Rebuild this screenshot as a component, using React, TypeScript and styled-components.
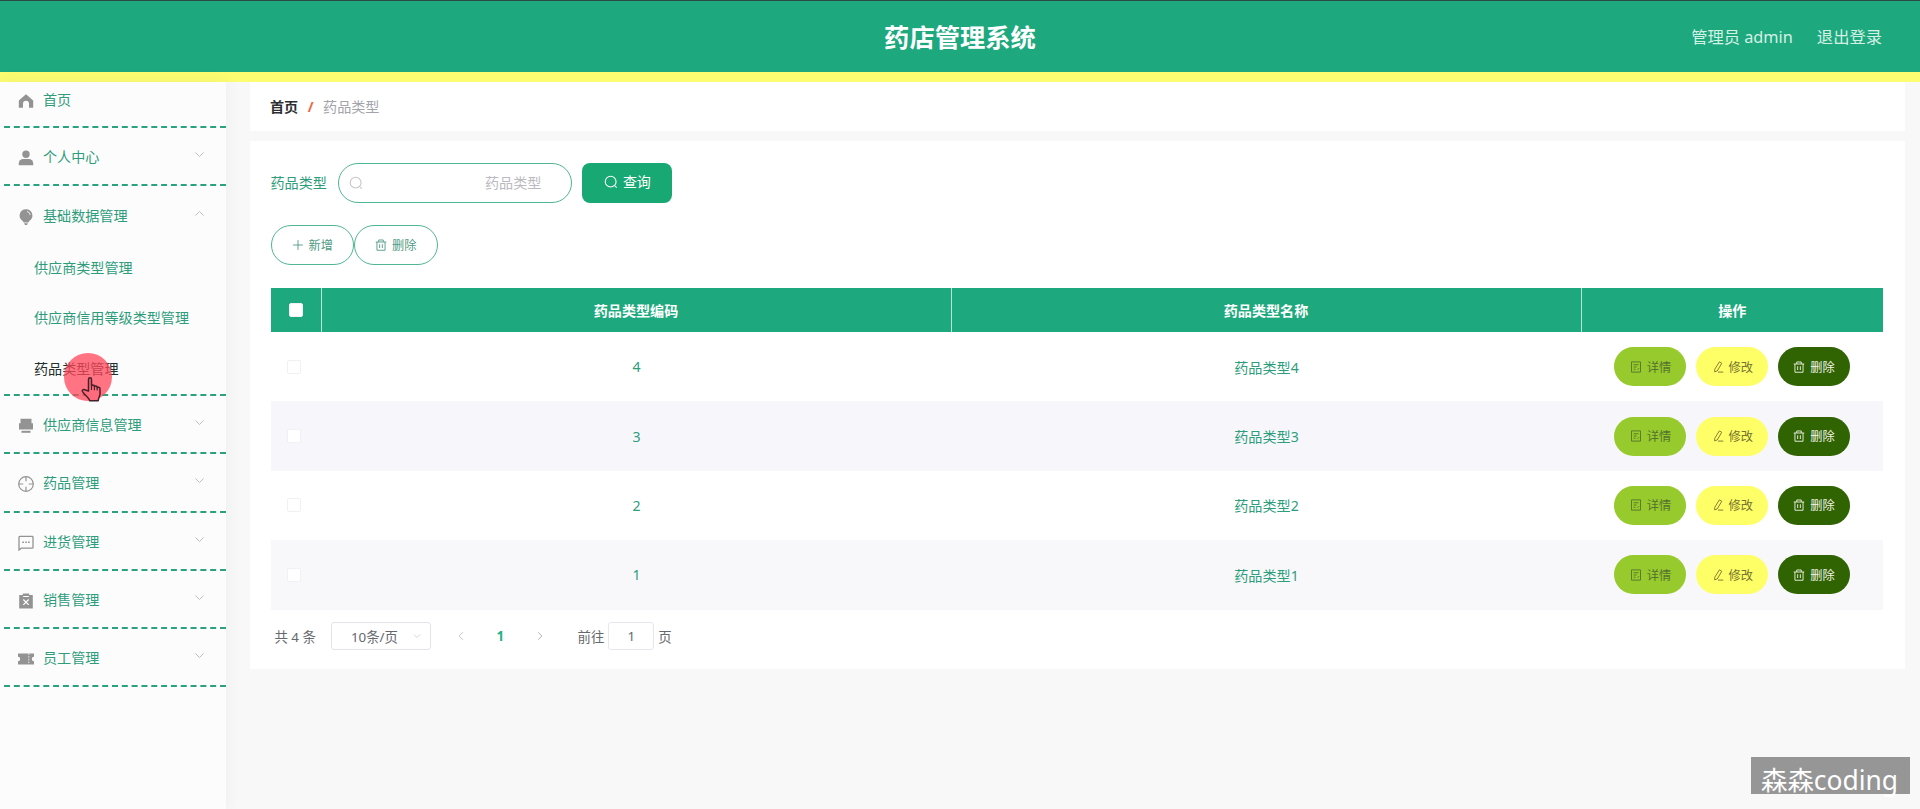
import React from "react";
import styled, { createGlobalStyle, css } from "styled-components";

const GREEN = "#1ea87e";

const GlobalStyle = createGlobalStyle`
  *, *::before, *::after { box-sizing: border-box; }
  html, body { margin: 0; height: 100%; }
  body {
    background: #f8f8f9;
    font-family: "Noto Sans", "Noto Sans CJK SC", sans-serif;
    font-size: 14.1px;
    color: #2e9d7b;
    overflow: hidden;
  }
  button, input { font-family: inherit; }
`;

const Page = styled.div`
  display: flex;
  flex-direction: column;
  height: 809px;
  overflow: hidden;
`;

const Header = styled.header`
  flex: none;
  display: grid;
  grid-template-columns: 1fr auto 1fr;
  align-items: center;
  height: 82px;
  padding: 0 38px 6px 38px;
  background: ${GREEN};
  border-top: 1px solid #2c4a42;
  border-bottom: 10.5px solid #fcfd70;
`;

const Title = styled.h1`
  grid-column: 2;
  margin: 0;
  font-size: 25.3px;
  line-height: 36px;
  font-weight: 700;
  color: #fff;
  padding-top: 6px;
`;

const Account = styled.div`
  display: flex;
  justify-content: flex-end;
  gap: 24px;
  padding-top: 7px;
  font-size: 16.3px;
  line-height: 24px;
  color: #d5f0e5;
`;

const Body = styled.div`
  flex: 1;
  display: flex;
  min-height: 0;
`;

const Sidebar = styled.nav`
  flex: none;
  width: 226px;
  padding: 0 0 0 4px;
  background: #fdfcfd;
  box-shadow: 0 0 14px rgba(70, 90, 80, 0.07);
`;

const MenuGroup = styled.div`
  border-bottom: 2px dashed #2ba27e;
`;

const MenuTitle = styled.div<{ $home?: boolean }>`
  display: flex;
  align-items: center;
  height: ${(p) => (p.$home ? "44.2px" : "56.3px")};
  padding: ${(p) => (p.$home ? "0 20px 8px 14px" : "2px 20px 0 14px")};
  line-height: 20px;

  > svg:first-child { margin: 2px 9px 0 0; flex: none; }
`;

const MenuLabel = styled.span`
  flex: 1;
  white-space: nowrap;
`;

const ArrowSlot = styled.span`
  display: flex;
  padding-bottom: 5px;
`;

const SubItem = styled.div<{ $active?: boolean }>`
  height: 50.4px;
  padding-left: 30px;
  line-height: 50px;
  color: ${(p) => (p.$active ? "#22302c" : "inherit")};
`;

const Main = styled.main`
  flex: 1;
  display: flex;
  flex-direction: column;
  gap: 10px;
  padding: 0 15px 0 24px;
`;

const Crumbs = styled.div`
  display: flex;
  align-items: center;
  height: 49px;
  padding: 0 20px 0;
  background: #fff;
  line-height: 20px;
  color: #a3a3aa;
`;

const CrumbHome = styled.b`
  color: #2b2f32;
`;

const CrumbSlash = styled.b`
  margin: 0 9.5px;
  color: #ee6747;
`;

const Card = styled.section`
  height: 528px;
  padding: 21.500px 22px 0 20.500px;
  background: #fff;
`;

const SearchRow = styled.div`
  display: flex;
  align-items: center;
  height: 41px;
`;

const FieldLabel = styled.span`
  line-height: 20px;
  padding-bottom: 1px;
`;

const SearchBox = styled.div`
  display: flex;
  align-items: center;
  justify-content: space-between;
  width: 234px;
  height: 40.500px;
  margin: 0 10px 0 11.500px;
  padding: 0 30px 1px 10px;
  border: 1px solid #4fb595;
  border-radius: 21px;
  line-height: 20px;
  color: #babac0;
`;

const QueryButton = styled.button`
  display: flex;
  align-items: center;
  justify-content: center;
  gap: 5px;
  width: 90px;
  height: 40.500px;
  padding: 0 0 2px;
  border: 0;
  border-radius: 8px;
  background: #18a873;
  color: #fff;
  font-size: 14px;
  line-height: 20px;
`;

const Tools = styled.div`
  display: flex;
  margin: 21px 0 23px;
`;

const pill = css`
  display: flex;
  align-items: center;
  justify-content: center;
  gap: 5px;
  padding: 0;
  border-radius: 21px;
  font-size: 12.2px;
`;

const OutlineButton = styled.button`
  ${pill}
  width: 83.500px;
  height: 40.500px;
  border: 1px solid #4fb595;
  background: #fff;
  color: #4f9a83;
`;

const Row = styled.div<{ $striped?: boolean }>`
  display: grid;
  grid-template-columns: 51px 630px 630px 1fr;
  height: 69.4px;
  background: ${(p) => (p.$striped ? "#f7f7fb" : "#fff")};

  &:nth-child(7) { background: #f8f8fa; }
`;

const HeadRow = styled(Row)`
  height: 44px;
  background: ${GREEN};
  color: #fff;
  font-weight: 700;
`;

const Cell = styled.div`
  display: flex;
  align-items: center;
  justify-content: center;

  ${HeadRow} &:not(:last-child) { border-right: 1px solid #b9e3d5; }
`;

const CheckCell = styled(Cell)`
  padding-right: 4px;

  ${HeadRow} & { padding-right: 0; }
`;

const CheckBox = styled.span`
  width: 14px;
  height: 14px;
  border: 1px solid #f0f0f5;
  border-radius: 2px;
  background: #fff;
`;

const Actions = styled(Cell)`
  gap: 9.8px;
`;

const tones = {
  detail: ["#97ca2c", "#56722f"],
  edit: ["#feff66", "#77732f"],
  remove: ["#306302", "#f0f5ea"],
};

const ActionButton = styled.button<{ $tone: keyof typeof tones }>`
  ${pill}
  width: 72px;
  height: 39px;
  border: 0;
  background: ${(p) => tones[p.$tone][0]};
  color: ${(p) => tones[p.$tone][1]};
`;

const Pager = styled.div`
  display: flex;
  align-items: center;
  height: 53px;
  padding-left: 4px;
  font-size: 13.4px;
  color: #65686d;
`;

const SizeSelect = styled.div`
  display: flex;
  align-items: center;
  justify-content: space-between;
  width: 100px;
  height: 28px;
  margin: 0 24px 0 15px;
  padding: 0 8px 0 19px;
  border: 1px solid #e3e4e9;
  border-radius: 3px;
`;

const CurrentPage = styled.b`
  margin: 0 29.500px;
  color: #22b183;
`;

const Jump = styled.span`
  margin-left: 32px;
`;

const PageInput = styled.span`
  width: 46px;
  height: 28px;
  margin: 0 4px;
  border: 1px solid #e6e6ec;
  border-radius: 3px;
  line-height: 26px;
  text-align: center;
`;

const Pointer = styled.div`
  position: absolute;
  left: 64px;
  top: 353px;
  width: 48px;
  height: 48px;
  border-radius: 50%;
  background: rgba(255, 70, 90, 0.75);

  svg { position: absolute; left: 17px; top: 23px; }
`;

const Watermark = styled.div`
  position: absolute;
  left: 1751px;
  top: 757px;
  width: 159px;
  height: 37px;
  padding-left: 10px;
  background: #969696;
  color: #fff;
  font-size: 26.4px;
  line-height: 46px;
  white-space: nowrap;
`;

type IconProps = { name: string; size?: number; color?: string };

const shapes: Record<string, React.ReactNode> = {
  home: <path fill="currentColor" stroke="none" d="M8 1.200 15.200 7.500v7.300h-4.200V10.800a3 3 0 0 0-6 0v4H.8V7.500z" />,
  user: (
    <g fill="currentColor" stroke="none">
      <circle cx="8" cy="4.200" r="3.700" />
      <path d="M.8 15.200v-1.900A4.300 4.300 0 0 1 5.100 9h5.800a4.300 4.300 0 0 1 4.300 4.300v1.900z" />
    </g>
  ),
  bulb: (
    <g fill="currentColor" stroke="none">
      <path d="M8 .2a6.300 6.300 0 0 1 3.300 11.700L10.300 13.600H5.700L4.700 11.900A6.300 6.300 0 0 1 8 .2z" />
      <path d="M6 14.200h4L9 16H7z" />
      <path d="M9 2.400a4.200 4.200 0 0 1 3.200 3.600" fill="none" stroke="#fff" strokeWidth=".8" />
    </g>
  ),
  printer: (
    <g fill="currentColor" stroke="none">
      <path d="M2.500.8h11v4.400h1.500v6.300H1V5.200h1.500z" />
      <path d="M3.500 12.800h9v2h-9z" />
    </g>
  ),
  target: (
    <>
      <circle cx="8" cy="8" r="7.300" />
      <path d="M8 .7v4.500M8 10.800v4.500M.7 8h4.500M10.800 8h4.500" />
    </>
  ),
  chat: (
    <>
      <path d="M1 15V2.200q0-.8.8-.8h12.400q.8 0 .8.800v10.200q0 .8-.8.800H3.200z" strokeWidth="1.300" />
      <path d="M4.300 7.200h1.600M7.200 7.200h1.600M10.100 7.200h1.600" strokeWidth="1.500" />
    </>
  ),
  release: (
    <>
      <path fill="currentColor" stroke="none" d="M1.200 2h3.600V.6h6.400V2h3.600v13.600H1.200z" />
      <path stroke="#fff" strokeWidth="1.200" d="M5.200 3.500h5.600M5.300 6.500l5.400 5.400M10.700 6.500l-5.400 5.400" />
    </>
  ),
  ticket: (
    <>
      <path fill="currentColor" stroke="none" d="M0 2.500h16v3.300a2.200 2.200 0 0 0 0 4.400v3.300H0v-3.300a2.200 2.200 0 0 0 0-4.400z" />
      <path stroke="#fff" strokeWidth=".8" strokeDasharray="1.500 1.200" d="M10.800 2.500v11" />
    </>
  ),
  down: <path d="m3 5.500 5 5 5-5" />,
  up: <path d="m3 10.500 5-5 5 5" />,
  left: <path d="m10.500 3-5 5 5 5" />,
  right: <path d="m5.500 3 5 5-5 5" />,
  search: (
    <>
      <circle cx="7.600" cy="7.600" r="6.200" />
      <path d="m12 12 2.500 2.500" />
    </>
  ),
  plus: <path d="M8 1.500v13M1.500 8h13" />,
  trash: <path d="M1 4h14M5 4V1.300h6V4M2.600 4v11h10.800V4M6.200 7v5M9.800 7v5" />,
  doc: <path d="M2 1.200h12v13.600H2zM4.800 5h6.400M4.800 8h4M4.800 11h2.500M10 11.500l2-2" />,
  edit: <path d="M9.800 1.200 13 3 7 13.200l-3.500 1.300.2-3.500zM8 14.800h7" />,
};

const Icon = ({ name, size = 14, color = "currentColor" }: IconProps) => (
  <svg width={size} height={size} viewBox="0 0 16 16" fill="none" stroke="currentColor" strokeWidth="1.2" color={color}>
    {shapes[name]}
  </svg>
);

const Hand = () => (
  <svg width="21" height="26" viewBox="0 0 21 26" fill="#ff6b7c" stroke="#43202a" strokeWidth="1.5" strokeLinejoin="round">
    <path d="M7.500 15V3.500c0-2.200 3-2.200 3 0V10c0-1.500 2.700-1.500 2.900.2v.6c.3-1.300 2.600-1.200 2.800.4v.7c.5-1 2.800-.8 2.800 1V18c0 2-1.500 3.500-1.800 6.800H8.800C8 21.500 3 18.500 1.500 15.500c-.8-1.800 1.500-2.700 2.700-1.500z" />
    <path d="M10.500 10v4M13.400 10.800v3.400M16.200 11.800v2.800" strokeWidth="1.1" />
  </svg>
);

const menu: { icon: string; label: string; children?: string[] }[] = [
  { icon: "user", label: "个人中心" },
  { icon: "bulb", label: "基础数据管理", children: ["供应商类型管理", "供应商信用等级类型管理", "药品类型管理"] },
  { icon: "printer", label: "供应商信息管理" },
  { icon: "target", label: "药品管理" },
  { icon: "chat", label: "进货管理" },
  { icon: "release", label: "销售管理" },
  { icon: "ticket", label: "员工管理" },
];

export default function App() {
  return (
    <>
      <GlobalStyle />
      <Page>
        <Header>
          <Title>药店管理系统</Title>
          <Account>
            <span>管理员 admin</span>
            <span>退出登录</span>
          </Account>
        </Header>
        <Body>
          <Sidebar>
            <MenuGroup>
              <MenuTitle $home>
                <Icon name="home" size={16} color="#939393" />
                <MenuLabel>首页</MenuLabel>
              </MenuTitle>
            </MenuGroup>
            {menu.map((m) => (
              <MenuGroup key={m.label}>
                <MenuTitle>
                  <Icon name={m.icon} size={16} color="#939393" />
                  <MenuLabel>{m.label}</MenuLabel>
                  <ArrowSlot>
                    <Icon name={m.children ? "up" : "down"} size={13} color="#bcbcc0" />
                  </ArrowSlot>
                </MenuTitle>
                {m.children?.map((c) => (
                  <SubItem key={c} $active={c === "药品类型管理"}>{c}</SubItem>
                ))}
              </MenuGroup>
            ))}
          </Sidebar>
          <Main>
            <Crumbs>
              <CrumbHome>首页</CrumbHome>
              <CrumbSlash>/</CrumbSlash>
              <span>药品类型</span>
            </Crumbs>
            <Card>
              <SearchRow>
                <FieldLabel>药品类型</FieldLabel>
                <SearchBox>
                  <Icon name="search" color="#c4c4c8" />
                  <span>药品类型</span>
                </SearchBox>
                <QueryButton>
                  <Icon name="search" />
                  查询
                </QueryButton>
              </SearchRow>
              <Tools>
                <OutlineButton><Icon name="plus" size={12} />新增</OutlineButton>
                <OutlineButton><Icon name="trash" size={12} />删除</OutlineButton>
              </Tools>
              <HeadRow>
                <CheckCell><CheckBox /></CheckCell>
                <Cell>药品类型编码</Cell>
                <Cell>药品类型名称</Cell>
                <Cell>操作</Cell>
              </HeadRow>
              {[4, 3, 2, 1].map((n) => (
                <Row key={n} $striped={n % 2 === 1}>
                  <CheckCell><CheckBox /></CheckCell>
                  <Cell>{n}</Cell>
                  <Cell>药品类型{n}</Cell>
                  <Actions>
                    <ActionButton $tone="detail"><Icon name="doc" size={12} />详情</ActionButton>
                    <ActionButton $tone="edit"><Icon name="edit" size={12} />修改</ActionButton>
                    <ActionButton $tone="remove"><Icon name="trash" size={12} />删除</ActionButton>
                  </Actions>
                </Row>
              ))}
              <Pager>
                <span>共 4 条</span>
                <SizeSelect>
                  10条/页
                  <Icon name="down" size={10} color="#c8cad0" />
                </SizeSelect>
                <Icon name="left" size={12} color="#bfc1c6" />
                <CurrentPage>1</CurrentPage>
                <Icon name="right" size={12} color="#a9abb0" />
                <Jump>前往</Jump>
                <PageInput>1</PageInput>
                <span>页</span>
              </Pager>
            </Card>
          </Main>
        </Body>
      </Page>
      <Pointer><Hand /></Pointer>
      <Watermark>森森coding</Watermark>
    </>
  );
}
